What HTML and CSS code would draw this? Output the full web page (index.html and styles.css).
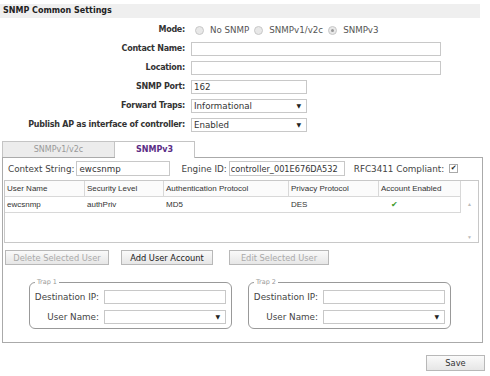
FILE: index.html
```html
<!DOCTYPE html>
<html lang="en">
<head>
  <meta charset="UTF-8" />
  <title>SNMP Settings</title>
  <link rel="stylesheet" href="styles.css">
</head>
<body>
  <div class="page">
    <div class="section-title">SNMP Common Settings</div>

    <!-- Common settings -->
    <div class="common">
      <div class="lbl">Mode:</div>
      <div class="radios">
        <span class="radio"></span><span class="radio-text">No SNMP</span>
        <span class="radio"></span><span class="radio-text">SNMPv1/v2c</span>
        <span class="radio checked"></span><span class="radio-text">SNMPv3</span>
      </div>

      <div class="lbl">Contact Name:</div>
      <div><input class="txt wide" type="text"></div>

      <div class="lbl">Location:</div>
      <div><input class="txt wide" type="text"></div>

      <div class="lbl">SNMP Port:</div>
      <div><input class="txt short" type="text" value="162"></div>

      <div class="lbl">Forward Traps:</div>
      <div><div class="select short">Informational<span class="arrow">&#9660;</span></div></div>

      <div class="lbl">Publish AP as interface of controller:</div>
      <div><div class="select short">Enabled<span class="arrow">&#9660;</span></div></div>
    </div>

    <div class="tabs">
      <div class="tab">SNMPv1/v2c</div>
      <div class="tab active">SNMPv3</div>
    </div>

    <div class="panel">
      <div class="ctx-row">
        <span class="plain-lbl">Context String:</span>
        <input class="txt ctx" type="text" value="ewcsnmp">
        <span class="plain-lbl engine-lbl">Engine ID:</span>
        <input class="txt engine" type="text" value="controller_001E676DA532">
        <span class="plain-lbl rfc-lbl">RFC3411 Compliant:</span>
        <span class="check">&#10004;</span>
      </div>

      <div class="users">
        <div class="users-grid">
          <div class="cell head">User Name</div>
          <div class="cell head">Security Level</div>
          <div class="cell head">Authentication Protocol</div>
          <div class="cell head">Privacy Protocol</div>
          <div class="cell head">Account Enabled</div>

          <div class="cell row">ewcsnmp</div>
          <div class="cell row">authPriv</div>
          <div class="cell row">MD5</div>
          <div class="cell row">DES</div>
          <div class="cell row"><span class="ok">&#10004;</span></div>
        </div>
        <div class="scrollbar">
          <span class="scroll-up">&#9650;</span>
          <span class="scroll-down">&#9660;</span>
        </div>
      </div>

      <div class="btn-row">
        <button class="btn disabled">Delete Selected User</button>
        <button class="btn add">Add User Account</button>
        <button class="btn disabled edit">Edit Selected User</button>
      </div>

      <div class="traps">
        <fieldset class="trap">
          <legend>Trap 1</legend>
          <div class="trap-grid">
            <span class="plain-lbl">Destination IP:</span>
            <input class="txt trap-in" type="text">
            <span class="plain-lbl">User Name:</span>
            <div class="select trap-in"><span class="arrow">&#9660;</span></div>
          </div>
        </fieldset>
        <fieldset class="trap">
          <legend>Trap 2</legend>
          <div class="trap-grid">
            <span class="plain-lbl">Destination IP:</span>
            <input class="txt trap-in" type="text">
            <span class="plain-lbl">User Name:</span>
            <div class="select trap-in"><span class="arrow">&#9660;</span></div>
          </div>
        </fieldset>
      </div>
    </div>

    <div class="save-row">
      <button class="btn save">Save</button>
    </div>
  </div>
</body>
</html>
```

FILE: styles.css
```css
body {
  margin: 0;
  padding: 0;
  background: #ffffff;
  font-family: 'DejaVu Sans', Verdana, sans-serif;
  font-size: 8.7px;
  color: #333333;
}

.page {
  width: 490px;
  padding-top: 4px;
}

.section-title {
  width: 477px;
  height: 14px;
  line-height: 14px;
  padding-left: 3px;
  background: #efefef;
  font-weight: bold;
  font-size: 8px;
  color: #222;
}

/* common settings form */
.common {
  display: grid;
  grid-template-columns: 185px 1fr;
  column-gap: 6px;
  row-gap: 5px;
  margin-top: 5px;
  grid-auto-rows: 14px;
}

.lbl {
  text-align: right;
  font-weight: bold;
  font-size: 8px;
  letter-spacing: -0.25px;
  line-height: 14px;
  color: #333;
}

.radios {
  display: flex;
  align-items: center;
  height: 14px;
}

.radio {
  width: 7px;
  height: 7px;
  border: 1px solid #c8c8c8;
  border-radius: 50%;
  background: #e8e8e8;
  margin: 0 6px 0 4px;
  position: relative;
}

.radio.checked::after {
  content: "";
  position: absolute;
  left: 2px;
  top: 2px;
  width: 3px;
  height: 3px;
  border-radius: 50%;
  background: #999;
}

.radio-text {
  color: #555;
  margin-right: 1px;
}

.txt {
  box-sizing: border-box;
  height: 14px;
  border: 1px solid #c8c8c8;
  padding: 0 2px;
  margin: 0;
  font-family: inherit;
  font-size: 8.7px;
  color: #333;
  background: #fff;
  outline: none;
}

.wide {
  width: 250px;
}

.short {
  width: 116px;
}

.select {
  box-sizing: border-box;
  height: 14px;
  line-height: 12px;
  border: 1px solid #c8c8c8;
  padding: 0 2px;
  position: relative;
  background: #fff;
}

.select .arrow {
  position: absolute;
  right: 5px;
  top: 0;
  font-size: 6px;
  color: #222;
}

/* tabs */
.tabs {
  display: flex;
  margin: 9px 0 0 2px;
}

.tab {
  box-sizing: border-box;
  height: 16px;
  line-height: 15px;
  text-align: center;
  border: 1px solid #c4c4c4;
  border-bottom: none;
  background: #ececec;
  color: #999;
  width: 113px;
  font-size: 8px;
}

.tab.active {
  width: 80px;
  background: #fff;
  color: #5b2d86;
  font-weight: bold;
  border-left: none;
  position: relative;
  top: 1px;
  margin-top: -1px;
  height: 17px;
}

.panel {
  box-sizing: border-box;
  width: 481px;
  margin-left: 2px;
  border: 1px solid #aaa;
  padding: 3px 3px 13px 1px;
}

.ctx-row {
  display: flex;
  align-items: center;
  height: 15px;
  padding-left: 4px;
}

.plain-lbl {
  color: #444;
  font-size: 8.8px;
}

.txt.ctx {
  width: 94px;
  height: 15px;
  margin-left: 2px;
}

.engine-lbl {
  margin-left: 11px;
}

.txt.engine {
  width: 116px;
  height: 15px;
  margin-left: 2px;
  padding: 0 1px;
  font-size: 8.2px;
}

.rfc-lbl {
  margin-left: 9px;
}

.check {
  display: inline-block;
  box-sizing: border-box;
  width: 9px;
  height: 9px;
  margin-left: 5px;
  border: 1px solid #aaa;
  font-size: 7px;
  line-height: 7px;
  text-align: center;
  color: #222;
}

/* users table */
.users {
  display: flex;
  height: 63px;
  margin-top: 4px;
  border: 1px solid #c8c8c8;
  width: 475px;
  box-sizing: border-box;
  font-family: 'Liberation Sans', Arial, sans-serif;
  font-size: 8px;
}

.users-grid {
  display: grid;
  grid-template-columns: 80px 79px 125px 90px 82px;
  grid-template-rows: 16px 16px;
  align-content: start;
  width: 456px;
}

.cell {
  padding-left: 2px;
  line-height: 15px;
  color: #333;
}

.cell.head {
  border-right: 1px solid #d8d8d8;
  border-bottom: 1px solid #d8d8d8;
  background: #fbfbfb;
}

.cell.row {
  border-bottom: 1px solid #d8d8d8;
}

.cell.row:last-child {
  border-right: 1px solid #d8d8d8;
}

.ok {
  color: #3a9a2a;
  margin-left: 10px;
}

.scrollbar {
  flex: 1;
  display: flex;
  flex-direction: column;
  justify-content: space-between;
  align-items: center;
  padding: 20px 0 2px;
  color: #bbb;
  font-size: 5px;
}

/* buttons */
.btn-row {
  display: flex;
  margin-top: 7px;
  padding-left: 1px;
}

.btn {
  box-sizing: border-box;
  height: 15px;
  padding: 0;
  border: 1px solid #b8b8b8;
  background: linear-gradient(#fafafa, #e6e6e6);
  font-family: 'DejaVu Sans', Verdana, sans-serif;
  font-size: 8.3px;
  color: #222;
}

.btn.disabled {
  color: #aaa;
  width: 104px;
}

.btn.add {
  width: 92px;
  margin-left: 12px;
}

.btn.edit {
  width: 100px;
  margin-left: 16px;
}

/* traps */
.traps {
  display: flex;
  margin-top: 13px;
  padding-left: 25px;
  gap: 16px;
}

.trap {
  box-sizing: border-box;
  width: 203px;
  margin: 0;
  padding: 4px 5px 4px 3px;
  border: 1px solid #999;
  border-radius: 6px;
}

.trap legend {
  padding: 0 2px;
  margin-left: 2px;
  font-size: 6.5px;
  line-height: 8px;
  color: #999;
}

.trap-grid {
  display: grid;
  grid-template-columns: 66px 1fr;
  column-gap: 5px;
  row-gap: 6px;
  align-items: center;
}

.trap-grid .plain-lbl {
  text-align: right;
  white-space: nowrap;
}

.trap-in {
  width: 122px;
  height: 14px;
}

.save-row {
  display: flex;
  justify-content: flex-end;
  padding: 12px 5px 0 0;
}

.btn.save {
  width: 59px;
  height: 16px;
  color: #333;
}
```
